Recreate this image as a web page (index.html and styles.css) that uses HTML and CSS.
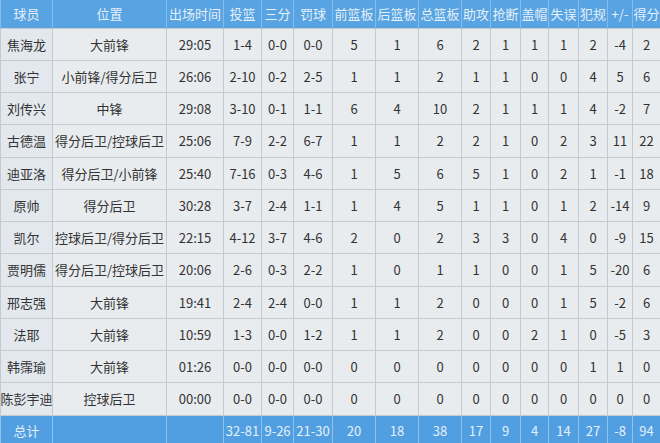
FILE: index.html
```html
<!DOCTYPE html>
<html lang="zh-CN">
<head>
<meta charset="utf-8">
<title>球员数据</title>
<link rel="stylesheet" href="styles.css">
</head>
<body>
<table class="stats">
  <colgroup>
    <col class="w52"><col class="w114"><col class="w57"><col class="w38"><col class="w32"><col class="w39">
    <col class="w43"><col class="w43"><col class="w43"><col class="w29"><col class="w30"><col class="w28">
    <col class="w30"><col class="w29"><col class="w25"><col class="w28">
  </colgroup>
  <thead>
    <tr><th>球员</th><th>位置</th><th>出场时间</th><th>投篮</th><th>三分</th><th>罚球</th><th>前篮板</th><th>后篮板</th><th>总篮板</th><th>助攻</th><th>抢断</th><th>盖帽</th><th>失误</th><th>犯规</th><th>+/-</th><th>得分</th></tr>
  </thead>
  <tbody>
    <tr><td class="name"><div class="nm">焦海龙</div></td><td>大前锋</td><td>29:05</td><td>1-4</td><td>0-0</td><td>0-0</td><td>5</td><td>1</td><td>6</td><td>2</td><td>1</td><td>1</td><td>1</td><td>2</td><td>-4</td><td>2</td></tr>
    <tr><td class="name"><div class="nm">张宁</div></td><td>小前锋/得分后卫</td><td>26:06</td><td>2-10</td><td>0-2</td><td>2-5</td><td>1</td><td>1</td><td>2</td><td>1</td><td>1</td><td>0</td><td>0</td><td>4</td><td>5</td><td>6</td></tr>
    <tr><td class="name"><div class="nm">刘传兴</div></td><td>中锋</td><td>29:08</td><td>3-10</td><td>0-1</td><td>1-1</td><td>6</td><td>4</td><td>10</td><td>2</td><td>1</td><td>1</td><td>1</td><td>4</td><td>-2</td><td>7</td></tr>
    <tr><td class="name"><div class="nm">古德温</div></td><td>得分后卫/控球后卫</td><td>25:06</td><td>7-9</td><td>2-2</td><td>6-7</td><td>1</td><td>1</td><td>2</td><td>2</td><td>1</td><td>0</td><td>2</td><td>3</td><td>11</td><td>22</td></tr>
    <tr><td class="name"><div class="nm">迪亚洛</div></td><td>得分后卫/小前锋</td><td>25:40</td><td>7-16</td><td>0-3</td><td>4-6</td><td>1</td><td>5</td><td>6</td><td>5</td><td>1</td><td>0</td><td>2</td><td>1</td><td>-1</td><td>18</td></tr>
    <tr><td class="name"><div class="nm">原帅</div></td><td>得分后卫</td><td>30:28</td><td>3-7</td><td>2-4</td><td>1-1</td><td>1</td><td>4</td><td>5</td><td>1</td><td>1</td><td>0</td><td>1</td><td>2</td><td>-14</td><td>9</td></tr>
    <tr><td class="name"><div class="nm">凯尔</div></td><td>控球后卫/得分后卫</td><td>22:15</td><td>4-12</td><td>3-7</td><td>4-6</td><td>2</td><td>0</td><td>2</td><td>3</td><td>3</td><td>0</td><td>4</td><td>0</td><td>-9</td><td>15</td></tr>
    <tr><td class="name"><div class="nm">贾明儒</div></td><td>得分后卫/控球后卫</td><td>20:06</td><td>2-6</td><td>0-3</td><td>2-2</td><td>1</td><td>0</td><td>1</td><td>1</td><td>0</td><td>0</td><td>1</td><td>5</td><td>-20</td><td>6</td></tr>
    <tr><td class="name"><div class="nm">邢志强</div></td><td>大前锋</td><td>19:41</td><td>2-4</td><td>2-4</td><td>0-0</td><td>1</td><td>1</td><td>2</td><td>0</td><td>0</td><td>0</td><td>1</td><td>5</td><td>-2</td><td>6</td></tr>
    <tr><td class="name"><div class="nm">法耶</div></td><td>大前锋</td><td>10:59</td><td>1-3</td><td>0-0</td><td>1-2</td><td>1</td><td>1</td><td>2</td><td>0</td><td>0</td><td>2</td><td>1</td><td>0</td><td>-5</td><td>3</td></tr>
    <tr><td class="name"><div class="nm">韩霈瑜</div></td><td>大前锋</td><td>01:26</td><td>0-0</td><td>0-0</td><td>0-0</td><td>0</td><td>0</td><td>0</td><td>0</td><td>0</td><td>0</td><td>0</td><td>1</td><td>1</td><td>0</td></tr>
    <tr><td class="name"><div class="nm">陈彭宇迪</div></td><td>控球后卫</td><td>00:00</td><td>0-0</td><td>0-0</td><td>0-0</td><td>0</td><td>0</td><td>0</td><td>0</td><td>0</td><td>0</td><td>0</td><td>0</td><td>0</td><td>0</td></tr>
  </tbody>
  <tfoot>
    <tr><td>总计</td><td></td><td></td><td>32-81</td><td>9-26</td><td>21-30</td><td>20</td><td>18</td><td>38</td><td>17</td><td>9</td><td>4</td><td>14</td><td>27</td><td>-8</td><td>94</td></tr>
  </tfoot>
</table>
</body>
</html>
```

FILE: styles.css
```css
html, body {
  margin: 0;
  padding: 0;
  background: #e9ecef;
  overflow: hidden;
}

.stats {
  width: 660px;
  table-layout: fixed;
  border-collapse: collapse;
  font-family: "Noto Sans CJK SC", "Noto Sans", sans-serif;
  font-size: 13px;
  color: #333;
}

.w52 { width: 52px; }
.w114 { width: 114px; }
.w57 { width: 57px; }
.w38 { width: 38px; }
.w32 { width: 32px; }
.w39 { width: 39px; }
.w43 { width: 43px; }
.w29 { width: 29px; }
.w30 { width: 30px; }
.w28 { width: 28px; }
.w25 { width: 25px; }

.stats th,
.stats td {
  padding: 0;
  text-align: center;
  vertical-align: middle;
  white-space: nowrap;
  overflow: visible;
}

.stats thead tr { height: 28px; }
.stats th {
  background: #58a3e1;
  color: #e4f0fb;
  font-weight: normal;
  border-left: 1px solid #86bdea;
  border-right: 1px solid #86bdea;
}

.stats tbody tr { height: 32.25px; }
.stats tbody td {
  background: #e9ecef;
  border: 1px solid #c6cacf;
}
.stats tbody td.name {
  background: #e3e8ee;
}

.nm {
  display: flex;
  justify-content: center;
}

.stats tfoot tr { height: 30px; }
.stats tfoot td {
  background: #519fe0;
  color: #e4f0fb;
  border-left: 1px solid #8fc4ee;
  border-right: 1px solid #8fc4ee;
  border-top: 1px solid #c6cacf;
}
```
